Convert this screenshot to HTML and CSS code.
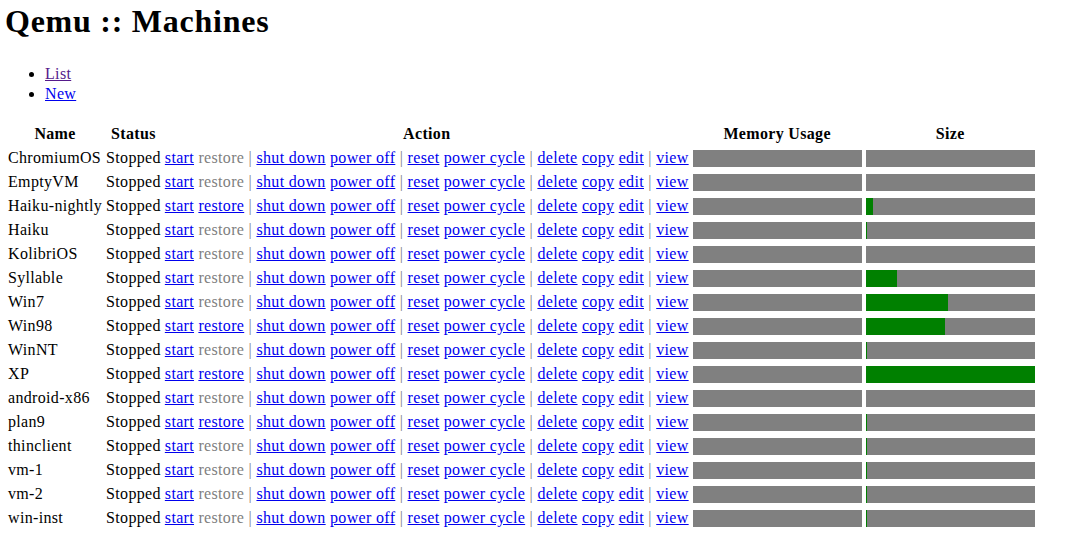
FILE: index.html
```html
<!DOCTYPE html>
<html>
<head>
<meta charset="utf-8">
<title>Qemu :: Machines</title>
<link rel="stylesheet" href="styles.css">
</head>
<body>
<h1 class="title">Qemu :: Machines</h1>
<ul class="nav">
  <li><a class="link visited" href="#list">List</a></li>
  <li><a class="link" href="#new">New</a></li>
</ul>
<table class="machines">
  <thead>
    <tr><th>Name</th><th>Status</th><th>Action</th><th>Memory Usage</th><th>Size</th></tr>
  </thead>
  <tbody>
    <tr><td>ChromiumOS</td><td>Stopped</td><td><a class="link" href="#">start</a> <span class="off">restore</span> <span class="sep">|</span> <a class="link" href="#">shut down</a> <a class="link" href="#">power off</a> <span class="sep">|</span> <a class="link" href="#">reset</a> <a class="link" href="#">power cycle</a> <span class="sep">|</span> <a class="link" href="#">delete</a> <a class="link" href="#">copy</a> <a class="link" href="#">edit</a> <span class="sep">|</span> <a class="link" href="#">view</a></td><td><div class="bar"><div class="fill" style="width:0px"></div></div></td><td><div class="bar"><div class="fill" style="width:0px"></div></div></td></tr>
    <tr><td>EmptyVM</td><td>Stopped</td><td><a class="link" href="#">start</a> <span class="off">restore</span> <span class="sep">|</span> <a class="link" href="#">shut down</a> <a class="link" href="#">power off</a> <span class="sep">|</span> <a class="link" href="#">reset</a> <a class="link" href="#">power cycle</a> <span class="sep">|</span> <a class="link" href="#">delete</a> <a class="link" href="#">copy</a> <a class="link" href="#">edit</a> <span class="sep">|</span> <a class="link" href="#">view</a></td><td><div class="bar"><div class="fill" style="width:0px"></div></div></td><td><div class="bar"><div class="fill" style="width:0px"></div></div></td></tr>
    <tr><td>Haiku-nightly</td><td>Stopped</td><td><a class="link" href="#">start</a> <a class="link" href="#">restore</a> <span class="sep">|</span> <a class="link" href="#">shut down</a> <a class="link" href="#">power off</a> <span class="sep">|</span> <a class="link" href="#">reset</a> <a class="link" href="#">power cycle</a> <span class="sep">|</span> <a class="link" href="#">delete</a> <a class="link" href="#">copy</a> <a class="link" href="#">edit</a> <span class="sep">|</span> <a class="link" href="#">view</a></td><td><div class="bar"><div class="fill" style="width:0px"></div></div></td><td><div class="bar"><div class="fill" style="width:7px"></div></div></td></tr>
    <tr><td>Haiku</td><td>Stopped</td><td><a class="link" href="#">start</a> <span class="off">restore</span> <span class="sep">|</span> <a class="link" href="#">shut down</a> <a class="link" href="#">power off</a> <span class="sep">|</span> <a class="link" href="#">reset</a> <a class="link" href="#">power cycle</a> <span class="sep">|</span> <a class="link" href="#">delete</a> <a class="link" href="#">copy</a> <a class="link" href="#">edit</a> <span class="sep">|</span> <a class="link" href="#">view</a></td><td><div class="bar"><div class="fill" style="width:0px"></div></div></td><td><div class="bar"><div class="fill" style="width:1px"></div></div></td></tr>
    <tr><td>KolibriOS</td><td>Stopped</td><td><a class="link" href="#">start</a> <span class="off">restore</span> <span class="sep">|</span> <a class="link" href="#">shut down</a> <a class="link" href="#">power off</a> <span class="sep">|</span> <a class="link" href="#">reset</a> <a class="link" href="#">power cycle</a> <span class="sep">|</span> <a class="link" href="#">delete</a> <a class="link" href="#">copy</a> <a class="link" href="#">edit</a> <span class="sep">|</span> <a class="link" href="#">view</a></td><td><div class="bar"><div class="fill" style="width:0px"></div></div></td><td><div class="bar"><div class="fill" style="width:0px"></div></div></td></tr>
    <tr><td>Syllable</td><td>Stopped</td><td><a class="link" href="#">start</a> <span class="off">restore</span> <span class="sep">|</span> <a class="link" href="#">shut down</a> <a class="link" href="#">power off</a> <span class="sep">|</span> <a class="link" href="#">reset</a> <a class="link" href="#">power cycle</a> <span class="sep">|</span> <a class="link" href="#">delete</a> <a class="link" href="#">copy</a> <a class="link" href="#">edit</a> <span class="sep">|</span> <a class="link" href="#">view</a></td><td><div class="bar"><div class="fill" style="width:0px"></div></div></td><td><div class="bar"><div class="fill" style="width:31px"></div></div></td></tr>
    <tr><td>Win7</td><td>Stopped</td><td><a class="link" href="#">start</a> <span class="off">restore</span> <span class="sep">|</span> <a class="link" href="#">shut down</a> <a class="link" href="#">power off</a> <span class="sep">|</span> <a class="link" href="#">reset</a> <a class="link" href="#">power cycle</a> <span class="sep">|</span> <a class="link" href="#">delete</a> <a class="link" href="#">copy</a> <a class="link" href="#">edit</a> <span class="sep">|</span> <a class="link" href="#">view</a></td><td><div class="bar"><div class="fill" style="width:0px"></div></div></td><td><div class="bar"><div class="fill" style="width:82px"></div></div></td></tr>
    <tr><td>Win98</td><td>Stopped</td><td><a class="link" href="#">start</a> <a class="link" href="#">restore</a> <span class="sep">|</span> <a class="link" href="#">shut down</a> <a class="link" href="#">power off</a> <span class="sep">|</span> <a class="link" href="#">reset</a> <a class="link" href="#">power cycle</a> <span class="sep">|</span> <a class="link" href="#">delete</a> <a class="link" href="#">copy</a> <a class="link" href="#">edit</a> <span class="sep">|</span> <a class="link" href="#">view</a></td><td><div class="bar"><div class="fill" style="width:0px"></div></div></td><td><div class="bar"><div class="fill" style="width:79px"></div></div></td></tr>
    <tr><td>WinNT</td><td>Stopped</td><td><a class="link" href="#">start</a> <span class="off">restore</span> <span class="sep">|</span> <a class="link" href="#">shut down</a> <a class="link" href="#">power off</a> <span class="sep">|</span> <a class="link" href="#">reset</a> <a class="link" href="#">power cycle</a> <span class="sep">|</span> <a class="link" href="#">delete</a> <a class="link" href="#">copy</a> <a class="link" href="#">edit</a> <span class="sep">|</span> <a class="link" href="#">view</a></td><td><div class="bar"><div class="fill" style="width:0px"></div></div></td><td><div class="bar"><div class="fill" style="width:1px"></div></div></td></tr>
    <tr><td>XP</td><td>Stopped</td><td><a class="link" href="#">start</a> <a class="link" href="#">restore</a> <span class="sep">|</span> <a class="link" href="#">shut down</a> <a class="link" href="#">power off</a> <span class="sep">|</span> <a class="link" href="#">reset</a> <a class="link" href="#">power cycle</a> <span class="sep">|</span> <a class="link" href="#">delete</a> <a class="link" href="#">copy</a> <a class="link" href="#">edit</a> <span class="sep">|</span> <a class="link" href="#">view</a></td><td><div class="bar"><div class="fill" style="width:0px"></div></div></td><td><div class="bar"><div class="fill" style="width:169px"></div></div></td></tr>
    <tr><td>android-x86</td><td>Stopped</td><td><a class="link" href="#">start</a> <span class="off">restore</span> <span class="sep">|</span> <a class="link" href="#">shut down</a> <a class="link" href="#">power off</a> <span class="sep">|</span> <a class="link" href="#">reset</a> <a class="link" href="#">power cycle</a> <span class="sep">|</span> <a class="link" href="#">delete</a> <a class="link" href="#">copy</a> <a class="link" href="#">edit</a> <span class="sep">|</span> <a class="link" href="#">view</a></td><td><div class="bar"><div class="fill" style="width:0px"></div></div></td><td><div class="bar"><div class="fill" style="width:0px"></div></div></td></tr>
    <tr><td>plan9</td><td>Stopped</td><td><a class="link" href="#">start</a> <a class="link" href="#">restore</a> <span class="sep">|</span> <a class="link" href="#">shut down</a> <a class="link" href="#">power off</a> <span class="sep">|</span> <a class="link" href="#">reset</a> <a class="link" href="#">power cycle</a> <span class="sep">|</span> <a class="link" href="#">delete</a> <a class="link" href="#">copy</a> <a class="link" href="#">edit</a> <span class="sep">|</span> <a class="link" href="#">view</a></td><td><div class="bar"><div class="fill" style="width:0px"></div></div></td><td><div class="bar"><div class="fill" style="width:1px"></div></div></td></tr>
    <tr><td>thinclient</td><td>Stopped</td><td><a class="link" href="#">start</a> <span class="off">restore</span> <span class="sep">|</span> <a class="link" href="#">shut down</a> <a class="link" href="#">power off</a> <span class="sep">|</span> <a class="link" href="#">reset</a> <a class="link" href="#">power cycle</a> <span class="sep">|</span> <a class="link" href="#">delete</a> <a class="link" href="#">copy</a> <a class="link" href="#">edit</a> <span class="sep">|</span> <a class="link" href="#">view</a></td><td><div class="bar"><div class="fill" style="width:0px"></div></div></td><td><div class="bar"><div class="fill" style="width:1px"></div></div></td></tr>
    <tr><td>vm-1</td><td>Stopped</td><td><a class="link" href="#">start</a> <span class="off">restore</span> <span class="sep">|</span> <a class="link" href="#">shut down</a> <a class="link" href="#">power off</a> <span class="sep">|</span> <a class="link" href="#">reset</a> <a class="link" href="#">power cycle</a> <span class="sep">|</span> <a class="link" href="#">delete</a> <a class="link" href="#">copy</a> <a class="link" href="#">edit</a> <span class="sep">|</span> <a class="link" href="#">view</a></td><td><div class="bar"><div class="fill" style="width:0px"></div></div></td><td><div class="bar"><div class="fill" style="width:1px"></div></div></td></tr>
    <tr><td>vm-2</td><td>Stopped</td><td><a class="link" href="#">start</a> <span class="off">restore</span> <span class="sep">|</span> <a class="link" href="#">shut down</a> <a class="link" href="#">power off</a> <span class="sep">|</span> <a class="link" href="#">reset</a> <a class="link" href="#">power cycle</a> <span class="sep">|</span> <a class="link" href="#">delete</a> <a class="link" href="#">copy</a> <a class="link" href="#">edit</a> <span class="sep">|</span> <a class="link" href="#">view</a></td><td><div class="bar"><div class="fill" style="width:0px"></div></div></td><td><div class="bar"><div class="fill" style="width:1px"></div></div></td></tr>
    <tr><td>win-inst</td><td>Stopped</td><td><a class="link" href="#">start</a> <span class="off">restore</span> <span class="sep">|</span> <a class="link" href="#">shut down</a> <a class="link" href="#">power off</a> <span class="sep">|</span> <a class="link" href="#">reset</a> <a class="link" href="#">power cycle</a> <span class="sep">|</span> <a class="link" href="#">delete</a> <a class="link" href="#">copy</a> <a class="link" href="#">edit</a> <span class="sep">|</span> <a class="link" href="#">view</a></td><td><div class="bar"><div class="fill" style="width:0px"></div></div></td><td><div class="bar"><div class="fill" style="width:1px"></div></div></td></tr>
  </tbody>
</table>
</body>
</html>
```
FILE: styles.css
```css
html, body {
  background: #ffffff;
}
body {
  margin: 0;
  padding-left: 5px;
  font-family: "Liberation Serif", "Times New Roman", serif;
  font-size: 16px;
  letter-spacing: 0.33px;
  color: #000000;
}
.title {
  font-size: 32px;
  font-weight: bold;
  line-height: 37px;
  letter-spacing: 0.75px;
  margin: 3px 0 24px;
}
.nav {
  margin: 0 0 18px;
  padding-left: 40px;
  line-height: 20px;
}
.link {
  color: #0000ee;
  text-decoration: underline;
}
.visited {
  color: #551a8b;
}
.off, .sep {
  color: #808080;
}
.machines {
  border-spacing: 2px;
  white-space: nowrap;
}
.machines th,
.machines td {
  padding: 0 1px 2px;
  line-height: 20px;
}
.machines th {
  font-weight: bold;
  text-align: center;
}
.machines td {
  text-align: left;
}
.bar {
  width: 169px;
  height: 17px;
  margin: 2px 0 1px;
  background: #808080;
  display: flex;
}
.fill {
  height: 100%;
  background: #008000;
}
```
